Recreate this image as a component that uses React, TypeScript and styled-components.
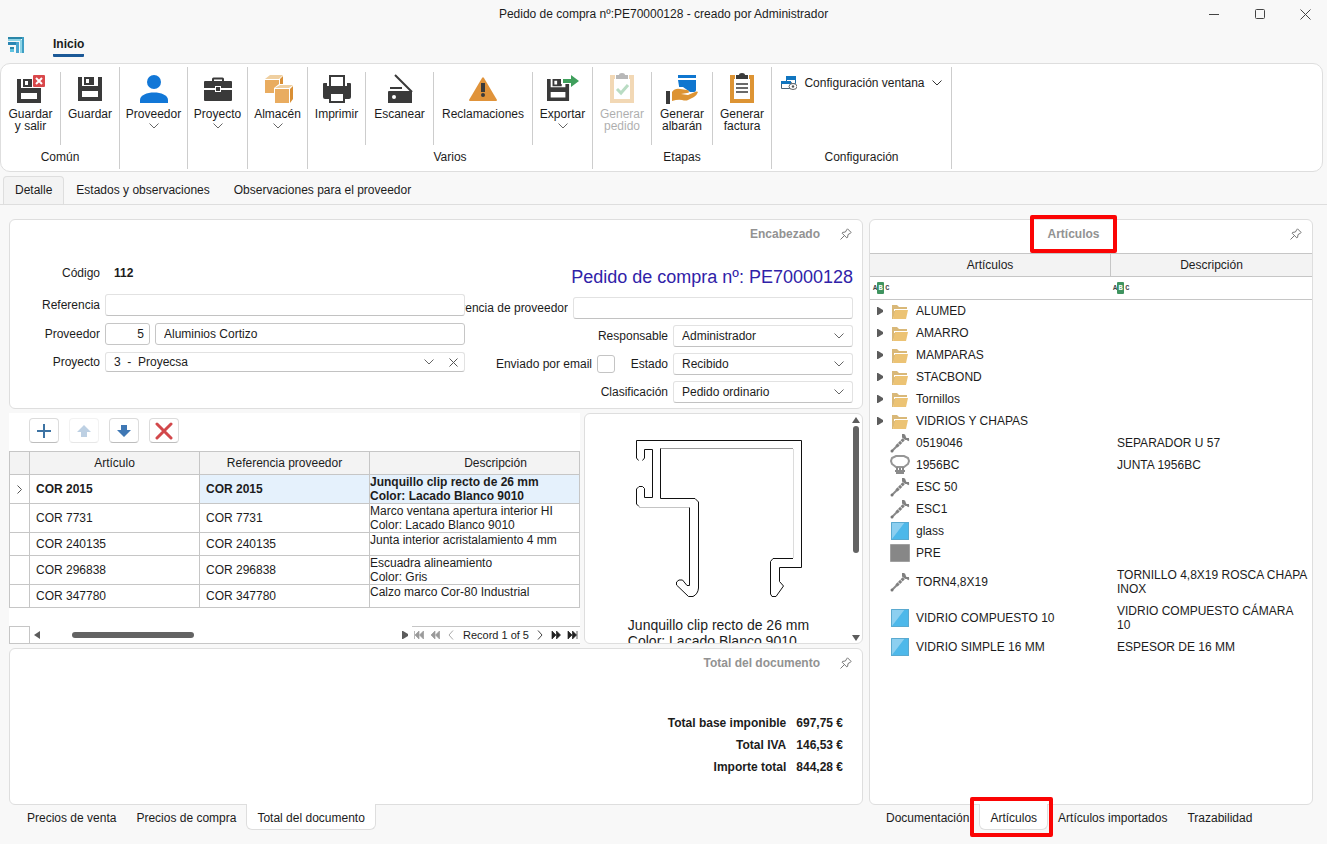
import React from 'react';
import styled, { createGlobalStyle, css } from 'styled-components';

const c = {
  page: '#f8f8f8',
  ink: '#1c1c1c',
  muted: '#929292',
  panelLine: '#dedede',
  gridLine: '#c6c6c6',
  head: '#f3f3f3',
  dark: '#3a3a3a',
  orange: '#dd9434',
  blue: '#1177d7',
  red: '#fb0404',
};

const GlobalStyle = createGlobalStyle`
  *, *::before, *::after { box-sizing: border-box; }
  body {
    margin: 0;
    background: ${c.page};
    color: ${c.ink};
    font: 12px/14px "Liberation Sans", Arial, sans-serif;
  }
  button, input, select { font: inherit; color: inherit; margin: 0; }
  svg { display: block; flex: none; }
`;

const Page = styled.div`
  display: flex;
  flex-direction: column;
  min-height: 100vh;
`;

/* ---------- window title and ribbon ---------- */

const TitleBar = styled.header`
  display: grid;
  grid-template-columns: 1fr auto 1fr;
  align-items: center;
  height: 28px;
`;

const WindowTitle = styled.h1`
  grid-column: 2;
  margin: 0;
  font-size: 12px;
  line-height: 14px;
  font-weight: 400;
`;

const WindowButtons = styled.div`
  display: flex;
  justify-content: flex-end;
`;

const PlainButton = styled.button`
  display: flex;
  align-items: center;
  justify-content: center;
  padding: 0;
  border: 0;
  background: none;
  cursor: pointer;
`;

const WindowButton = styled(PlainButton)`
  width: 46px;
  height: 26px;
  &:last-child { width: 44px; }
`;

const MenuBar = styled.nav`
  display: flex;
  align-items: flex-start;
  gap: 28px;
  height: 35px;
  padding: 9px 0 0 8px;
`;

const MenuTab = styled.a`
  padding-bottom: 3px;
  border-bottom: 3px solid #1b5997;
  border-radius: 1px;
  color: ${c.ink};
  font-weight: 700;
  text-decoration: none;
`;

const Ribbon = styled.div`
  display: flex;
  height: 109px;
  margin-right: 4px;
  padding: 3px 0 2px;
  background: #fff;
  border: 1px solid ${c.panelLine};
  border-radius: 10px;
`;

const RibbonGroup = styled.section`
  display: flex;
  flex-direction: column;
  border-right: 1px solid #cdcdcd;
`;

const RibbonItems = styled.div`
  display: flex;
  flex: 1;
`;

const RibbonLabel = styled.div`
  height: 19px;
  text-align: center;
`;

const RibbonButton = styled.button<{ $w: number }>`
  display: flex;
  flex-direction: column;
  align-items: center;
  width: ${(p) => p.$w}px;
  margin: 5px 0;
  padding: 0;
  border: 0;
  background: none;
  line-height: 12px;
  white-space: pre-line;
  cursor: pointer;
  & + & { border-left: 1px solid #cdcdcd; }
  &:disabled { color: ${c.ink}; }
  &:disabled > * { opacity: 0.36; }
  > span { margin: 4px 0 3px; }
`;

const WideButton = styled(PlainButton)`
  align-items: center;
  align-self: flex-start;
  gap: 7px;
  width: 179px;
  height: 32px;
`;

const ViewTabs = styled.nav`
  display: flex;
  align-items: flex-end;
  height: 33px;
  padding-left: 3px;
  border-bottom: 1px solid ${c.panelLine};
`;

const ViewTab = styled.a<{ $active?: boolean }>`
  height: 28px;
  padding: 7px 12px 0;
  color: ${c.ink};
  text-decoration: none;
  ${(p) =>
    p.$active &&
    css`
      padding: 6px 11px 0;
      background: ${c.head};
      border: 1px solid ${c.panelLine};
      border-bottom: 0;
      border-radius: 4px 4px 0 0;
    `}
`;

/* ---------- workspace ---------- */

const Workspace = styled.main`
  display: grid;
  grid-template-columns: minmax(0, 854fr) minmax(0, 444fr);
  gap: 6px;
  flex: 1;
  padding: 14px 14px 14px 9px;
`;

const Column = styled.div`
  display: flex;
  flex-direction: column;
  min-width: 0;
`;

const Panel = styled.section<{ $grow?: boolean }>`
  display: flex;
  flex-direction: column;
  flex: ${(p) => (p.$grow ? '1' : 'none')};
  background: #fff;
  border: 1px solid ${c.panelLine};
  border-radius: 6px;
`;

const Caption = styled.div<{ $center?: boolean }>`
  display: flex;
  align-items: center;
  height: ${(p) => (p.$center ? '33px' : '28px')};
  padding-bottom: ${(p) => (p.$center ? '5px' : '0')};
  color: ${c.muted};
  font-weight: 700;
`;

const CaptionText = styled.h2<{ $center?: boolean }>`
  flex: 1;
  margin: 0;
  padding-right: ${(p) => (p.$center ? '2px' : '9px')};
  font-size: 12px;
  line-height: 14px;
  text-align: ${(p) => (p.$center ? 'center' : 'right')};
`;

const PinButton = styled(PlainButton)`
  width: 33px;
  height: 28px;
`;

const Marked = styled.span`
  position: relative;
  display: inline-block;
`;

const Highlight = styled.span<{ $inset: string }>`
  position: absolute;
  z-index: 2;
  inset: ${(p) => p.$inset};
  border: 4px solid ${c.red};
  border-radius: 2px;
  pointer-events: none;
`;

/* ---------- order form ---------- */

const Form = styled.form`
  display: grid;
  grid-template-columns: minmax(0, 455fr) minmax(0, 388fr);
  padding: 0 9px 5px 0;
`;

const FormColumn = styled.div<{ $gap: number }>`
  display: flex;
  flex-direction: column;
  gap: ${(p) => p.$gap}px;
`;

const FormRow = styled.div`
  display: flex;
  align-items: center;
  gap: 5px;
`;

const Label = styled.label<{ $w?: number }>`
  display: flex;
  justify-content: flex-end;
  flex: ${(p) => (p.$w ? 'none' : '1')};
  width: ${(p) => (p.$w ? p.$w + 'px' : 'auto')};
  min-width: 0;
  overflow: hidden;
  white-space: nowrap;
`;

const CodeRow = styled(FormRow)`
  height: 39px;
  padding-top: 10px;
`;

const Code = styled.output`
  padding-left: 9px;
  font-weight: 700;
`;

const OrderTitle = styled.div`
  padding: 16px 0 1px;
  color: #3022a8;
  font-size: 18px;
  line-height: 26px;
  text-align: right;
`;

const field = css`
  height: 22px;
  background: #fff;
  border: 1px solid #e2e2e2;
  border-bottom-color: #c2c2c2;
  border-radius: 3px;
`;

const TextField = styled.input<{ $w?: number; $strong?: boolean; $right?: boolean }>`
  ${field}
  flex: ${(p) => (p.$w ? 'none' : '1')};
  width: ${(p) => (p.$w ? p.$w + 'px' : 'auto')};
  min-width: 0;
  padding: 0 ${(p) => (p.$right ? 5 : 8)}px 0 8px;
  border-color: ${(p) => (p.$strong ? '#c6c6c6' : '')};
  text-align: ${(p) => (p.$right ? 'right' : 'left')};
`;

const ComboFrame = styled.div<{ $w?: number; $low?: boolean }>`
  ${field}
  height: ${(p) => (p.$low ? 20 : 22)}px;
  display: grid;
  grid-template-columns: 1fr 26px auto;
  align-items: center;
  flex: ${(p) => (p.$w ? 'none' : '1')};
  width: ${(p) => (p.$w ? p.$w + 'px' : 'auto')};
  > svg {
    grid-area: 1 / 2;
    justify-self: center;
    pointer-events: none;
  }
`;

const Select = styled.select`
  grid-area: 1 / 1 / 2 / 3;
  height: 100%;
  padding: 0 26px 0 8px;
  border: 0;
  background: none;
  appearance: none;
`;

const ClearButton = styled(PlainButton)`
  grid-column: 3;
  width: 22px;
  height: 18px;
`;

const Check = styled.input`
  && { margin-right: 10px; }
  appearance: none;
  width: 18px;
  height: 18px;
  background: #fff;
  border: 1px solid #c4c4c4;
  border-radius: 3px;
`;

/* ---------- order lines ---------- */

const LinesArea = styled.div`
  display: grid;
  grid-template-columns: minmax(0, 571fr) minmax(0, 279fr);
  gap: 4px;
  height: 231px;
  margin: 4px 0;
`;

const LinesPanel = styled.section`
  display: flex;
  flex-direction: column;
  background: #fff;
  border-bottom: 1px solid ${c.gridLine};
`;

const Toolbar = styled.div`
  display: flex;
  gap: 10px;
  height: 38px;
  padding: 5px 0 0 20px;
`;

const ToolButton = styled(PlainButton)`
  width: 30px;
  height: 25px;
  background: #fff;
  border: 1px solid #dcdcdc;
  border-bottom-color: #bdbdbd;
  border-radius: 4px;
  &:disabled { opacity: 0.36; }
`;

const LinesTable = styled.table`
  width: 100%;
  table-layout: fixed;
  border-collapse: separate;
  border-spacing: 0;
  border-left: 1px solid ${c.gridLine};
  th {
    height: 24px;
    padding: 0;
    background: ${c.head};
    border: solid ${c.gridLine};
    border-width: 1px 1px 1px 0;
    font-weight: 400;
  }
  th:last-child { padding-left: 42px; }
  td {
    height: 23px;
    padding: 0 6px;
    border: solid ${c.gridLine};
    border-width: 0 1px 1px 0;
    white-space: nowrap;
  }
`;

const LineRow = styled.tr<{ $tall: boolean; $current: boolean }>`
  font-weight: ${(p) => (p.$current ? 700 : 400)};
  td { height: ${(p) => (p.$tall ? 29 : 23)}px; }
  td:nth-child(n + 3) { background: ${(p) => (p.$current ? '#e5f1fc' : 'none')}; }
  td:last-child {
    padding: 0;
    vertical-align: top;
    white-space: pre-line;
  }
`;

const LinesFooter = styled.div`
  display: flex;
  align-items: stretch;
  height: 17px;
  margin-top: auto;
`;

const FooterCorner = styled.div`
  width: 21px;
  border: solid ${c.gridLine};
  border-width: 1px 1px 0;
`;

const ScrollTrack = styled.div`
  display: flex;
  flex: 1;
  align-items: center;
  padding: 0 4px;
`;

const ScrollThumb = styled.div`
  width: 122px;
  height: 6px;
  margin: 0 auto 0 32px;
  border-radius: 3px;
  background: #636363;
`;

const Navigator = styled.div`
  display: flex;
  align-items: center;
  border-top: 1px solid ${c.gridLine};
  font-size: 11px;
  > span { padding: 0 3px; }
`;

const NavButton = styled(PlainButton)`
  width: 16px;
  height: 16px;
  &:disabled { opacity: 0.45; }
`;

const Preview = styled.section`
  display: flex;
  background: #fff;
  border: 1px solid ${c.panelLine};
  border-radius: 6px;
  overflow: hidden;
`;

const PreviewBody = styled.figure`
  display: flex;
  flex: 1;
  flex-direction: column;
  align-items: center;
  gap: 17px;
  margin: 0;
  padding: 22px 0 0 2px;
`;

const PreviewCaption = styled.figcaption`
  font-size: 14px;
  line-height: 16px;
  white-space: pre-line;
`;

const PreviewScroll = styled.div`
  display: flex;
  flex-direction: column;
  align-items: center;
  justify-content: space-between;
  width: 12px;
  padding: 3px 0 2px;
`;

const PreviewThumb = styled.div`
  width: 6px;
  height: 127px;
  margin: 3px 0 auto;
  border-radius: 3px;
  background: #636363;
`;

/* ---------- totals ---------- */

const Totals = styled.dl`
  display: grid;
  grid-template-columns: 1fr auto;
  gap: 8px 10px;
  margin: 0;
  padding: 39px 19px 29px 0;
  font-weight: 700;
  text-align: right;
  dt, dd { margin: 0; }
`;

const BottomTabs = styled.nav<{ $indent: number }>`
  display: flex;
  height: 26px;
  margin-top: -1px;
  padding-left: ${(p) => p.$indent}px;
`;

const BottomTab = styled.a<{ $active?: boolean }>`
  position: relative;
  padding: 7px 10px 0;
  color: ${c.ink};
  text-decoration: none;
  white-space: nowrap;
  ${(p) =>
    p.$active &&
    css`
      background: #fff;
      border: 1px solid ${c.panelLine};
      border-top: 0;
      border-radius: 0 0 6px 6px;
    `}
`;

/* ---------- articles ---------- */

const ArticlesTable = styled.table`
  width: 100%;
  table-layout: fixed;
  border-collapse: separate;
  border-spacing: 0;
  th {
    height: 24px;
    padding: 0;
    background: ${c.head};
    border: solid ${c.gridLine};
    border-width: 1px 0;
    font-weight: 400;
  }
  th + th { border-left-width: 1px; }
  td { padding: 0; }
`;

const FilterCell = styled.td`
  height: 23px;
  border-bottom: 1px solid ${c.gridLine};
`;

const FilterBox = styled.label`
  display: flex;
  align-items: center;
  padding-left: 3px;
`;

const FilterInput = styled.input`
  flex: 1;
  min-width: 0;
  height: 18px;
  border: 0;
  background: none;
`;

const AbcMark = styled.span`
  display: flex;
  align-items: center;
  color: #444;
  font: 700 7px/12px "Liberation Mono", monospace;
  b {
    width: 7px;
    margin: 0 1px 0 0;
    border-radius: 1px;
    background: #3f9460;
    color: #fff;
    text-align: center;
  }
`;

const ArticleRow = styled.tr<{ $tall: boolean }>`
  height: ${(p) => (p.$tall ? 36 : 22)}px;
  td:last-child {
    padding-left: 7px;
    white-space: pre-line;
  }
`;

const ArticleName = styled.div`
  display: flex;
  align-items: center;
  padding-left: 2px;
  > svg { margin-right: 6px; }
`;

const Expander = styled(PlainButton)`
  width: 18px;
  height: 20px;
  padding-right: 2px;
`;

/* ---------- icons ---------- */

const Ico = ({ children }: { children: React.ReactNode }) => (
  <svg width="32" height="32" viewBox="0 0 32 32" aria-hidden="true">{children}</svg>
);

const floppy = 'M0 0h4v9h16V0h4v24H0zM4 14v6h16v-6zM6 0h10v8H6zM8 2v4h3V2z';

const SaveExitIcon = () => (
  <Ico>
    <path transform="translate(2 7)" fill={c.dark} fillRule="evenodd" d={floppy} />
    <path fill="#fff" d="M17 2h14v14H17z" />
    <rect x="18" y="3" width="12" height="12" rx="1" fill="#d9484b" />
    <path d="M21 6l6 6M27 6l-6 6" stroke="#fff" strokeWidth="2" />
  </Ico>
);
const SaveIcon = () => (
  <Ico><path transform="translate(4 5)" fill={c.dark} fillRule="evenodd" d={floppy} /></Ico>
);
const ExportIcon = () => (
  <Ico>
    <path transform="translate(0 7) scale(.92)" fill={c.dark} fillRule="evenodd" d={floppy} />
    <path fill="#fff" d="M14 2h18v10H14z" />
    <path fill="#3f9f5c" d="M16 7h8V3l8 6-8 6v-4h-8z" />
  </Ico>
);
const UserIcon = () => (
  <Ico>
    <circle cx="16" cy="10" r="7" fill={c.blue} />
    <path fill={c.blue} d="M2 31v-3c0-5 7-7.500 14-7.500s14 2.500 14 7.500v3z" />
  </Ico>
);
const CaseIcon = () => (
  <Ico>
    <path fill="none" stroke={c.dark} strokeWidth="2" d="M11 10V7q0-.5.5-.5h9q.5 0 .5.5v3" />
    <path fill={c.dark} d="M3 9h26q1 0 1 1v6H19v-2h-6v2H2v-6q0-1 1-1zM2 18h11v2h6v-2h11v10q0 1-1 1H3q-1 0-1-1z" />
    <path fill="#fff" d="M13 14h6v6h-6z" />
    <path fill={c.dark} d="M14 15h4v4h-4z" />
  </Ico>
);
const BoxesIcon = () => (
  <Ico>
    <path fill="#e9ac60" d="M3 8h14v13H3z" />
    <path fill="#efcfa0" d="M3 7l5-4h13l-4 4z" />
    <path fill="#d98f35" d="M18 7l3-3v8l-3 1z" />
    <path fill="#fff" d="M12 22v-6l5-4h15v20H12z" />
    <path fill="#e9ac60" d="M13 17h14v14H13z" />
    <path fill="#efcfa0" d="M13 16l5-3h13l-4 3z" />
    <path fill="#d98f35" d="M28 17l3-3v13l-3 4z" />
  </Ico>
);
const PrinterIcon = () => (
  <Ico>
    <path fill={c.dark} d="M3 11h3v3h20v-3h3q1 0 1 1v13q0 2-2 2H4q-2 0-2-2V12q0-1 1-1z" />
    <path fill="#fff" stroke={c.dark} strokeWidth="2" d="M9 15V4h14v11" />
    <path fill={c.dark} d="M6 14h20v4H6z" />
    <path fill="#fff" stroke={c.dark} strokeWidth="2" d="M9 21h14v9H9z" />
  </Ico>
);
const ScannerIcon = () => (
  <Ico>
    <path stroke={c.dark} strokeWidth="2" d="M11 3l17 17M6 16h12" />
    <path fill={c.dark} d="M5 19h22q1 0 1 1v11H4V20q0-1 1-1z" />
    <circle cx="10" cy="25" r="2" fill="#fff" />
  </Ico>
);
const WarnIcon = () => (
  <Ico>
    <path fill="#e0933a" d="M15 6q1-1.500 2 0l13 22q0 1-1 1H3q-1 0-1-1z" />
    <path fill={c.dark} d="M14 11h4v9h-4z" />
    <circle cx="16" cy="23" r="2" fill={c.dark} />
  </Ico>
);
const Board = ({ children }: { children: React.ReactNode }) => (
  <Ico>
    <path fill="#fff" stroke={c.orange} strokeWidth="4" d="M6 5h20v24H6z" />
    <path fill="#fff" d="M9 2h14v7H9z" />
    <path fill={c.dark} d="M10 3h3q0-2 3-2t3 2h3v4H10z" />
    {children}
  </Ico>
);
const OrderIcon = () => (
  <Board><path fill="none" stroke="#3f9f5c" strokeWidth="3" d="M11 17l4 4 7-8" /></Board>
);
const InvoiceIcon = () => (
  <Board><path stroke="#6a6a6a" strokeWidth="2" d="M10 12h12M10 16h12M10 20h12" /></Board>
);
const DeliveryIcon = () => (
  <Ico>
    <path fill="#0f76cf" d="M12 3h18v3H12zM12 8h18v10q0 2-2 2H14z" />
    <path fill="#fff" d="M5 20l7-5h5l7 5v3H5z" />
    <path fill={c.orange} d="M6 29V20q3-4 8-3l7 1q2 0 2 2 0 1-2 1l-6 1 7 1 7-3q2-1 3 0-1 3-4 5l-6 3q-2 1-6 0-4-1-10 1z" />
    <path fill={c.dark} d="M0 19h4v13H0z" />
  </Ico>
);
const WindowsIcon = () => (
  <svg width="16" height="14" viewBox="0 0 16 14" aria-hidden="true">
    <path fill="#fff" stroke="#1e6ca8" d="M5.500 1.500h9v6h-9z" />
    <path fill="#1175bf" d="M5 0h10v4H5z" />
    <path fill="#fff" stroke="#4a6275" d="M.5 6.500h10v6H.5z" />
    <path fill="#1175bf" d="M0 5h10v3H0z" />
    <ellipse cx="12" cy="10.500" rx="4" ry="3" fill="#fff" stroke="#666" />
    <circle cx="12" cy="10.500" r="1.200" fill="#555" />
  </svg>
);
const Chevron = ({ color = '#666' }: { color?: string }) => (
  <svg width="10" height="6" viewBox="0 0 10 6" aria-hidden="true">
    <path fill="none" stroke={color} d="M.5.5L5 5 9.500.5" />
  </svg>
);
const CrossIcon = () => (
  <svg width="9" height="9" viewBox="0 0 9 9" aria-hidden="true">
    <path stroke="#555" d="M.5.5l8 8M8.500.5l-8 8" />
  </svg>
);
const PinIcon = () => (
  <svg width="12" height="12" viewBox="0 0 12 12" aria-hidden="true">
    <path fill="none" stroke="#777" d="M7.500.8l3.700 3.700-1 .8-2.200 1.300-.4 2.800-.8.5-4.700-4.700.5-.8 2.800-.4L6.700 1.800zM4.300 7.700L.5 11.500" />
  </svg>
);
const LogoIcon = () => (
  <svg width="17" height="17" viewBox="0 0 17 17" aria-hidden="true">
    <path fill="#8fd4e6" d="M0 2h13v2H0zM12 3h2v13h-2z" />
    <path fill="#2a86a8" d="M0 0h16v2H0z" />
    <path fill="#3f9fc4" d="M14 0h2v16h-2z" />
    <path fill="#2a86b4" d="M0 5h10v3H0z" />
    <path fill="#4aa5cf" d="M8 5h3v11H8z" />
    <path fill="#5fc3e0" d="M2 10h4v5H2z" />
    <path fill="#2a86a8" d="M2 10h4v2H2z" />
  </svg>
);
const Triangle = ({ dir }: { dir: 'left' | 'right' | 'up' | 'down' }) => {
  const wide = dir === 'up' || dir === 'down';
  const d = {
    left: 'M6 0v8L0 4z',
    right: 'M0 0h1l5 3v2L1 8H0z',
    up: 'M0 6L4 0l4 6z',
    down: 'M0 0h8L4 6z',
  }[dir];
  return (
    <svg width={wide ? 8 : 6} height={wide ? 6 : 8} aria-hidden="true">
      <path fill="#5c5c5c" d={d} />
    </svg>
  );
};
const navPaths = {
  first: 'M.5 1v8M5 1v8L1 5zM9.500 1v8l-4-4z',
  prevPage: 'M5 1v8L1 5zM9.500 1v8l-4-4z',
  nextPage: 'M1 1v8l4-4zM5.500 1v8l4-4z',
  last: 'M1 1v8l4-4zM5.500 1v8l4-4zM10 1v8',
  prev: 'M7 .5L3 5l4 4.500',
  next: 'M3 .5L7 5 3 9.500',
};
const NavIcon = ({ kind }: { kind: keyof typeof navPaths }) => {
  const single = kind === 'prev' || kind === 'next';
  return (
    <svg width="11" height="10" viewBox="0 0 11 10" aria-hidden="true">
      {single ? (
        <path d={navPaths[kind]} fill="none" stroke="#444" />
      ) : (
        <path d={navPaths[kind]} fill="#222" stroke="#222" strokeWidth=".7" />
      )}
    </svg>
  );
};
const ToolIcon = ({ kind }: { kind: 'add' | 'up' | 'down' | 'remove' }) => (
  <svg width="18" height="18" viewBox="0 0 18 18" aria-hidden="true">
    {kind === 'add' && <path stroke="#3d73a3" strokeWidth="2" d="M9 2v14M2 9h14" />}
    {kind === 'up' && <path fill="#4a7fb2" d="M9 3l7 7h-4v5H6v-5H2z" />}
    {kind === 'down' && <path fill="#3f78b5" d="M9 15L2 8h4V3h6v5h4z" />}
    {kind === 'remove' && (
      <path stroke="#d2484b" strokeWidth="3" strokeLinecap="round" d="M2 2l14 14M16 2L2 16" />
    )}
  </svg>
);

type Kind = 'folder' | 'screw' | 'seal' | 'glass' | 'solid';
const KindIcon = ({ kind }: { kind: Kind }) => (
  <svg width="20" height="20" viewBox="0 0 20 20" aria-hidden="true">
    {kind === 'folder' && (
      <>
        <path fill="#d9b878" d="M2 4h5l2 2h8v4H6l-3 8H2z" />
        <path fill="#fff" d="M4 8h14v2H4z" />
        <path fill="#ecc374" d="M5 9h13l-2 9H3z" />
      </>
    )}
    {kind === 'screw' && (
      <>
        <path stroke="#8a8a8a" strokeWidth="2" d="M2 18L8 12" />
        <path stroke="#808080" strokeWidth="3" d="M6.500 13.500L15 5" strokeDasharray="3 .6" />
        <path fill="none" stroke="#808080" strokeWidth="2" d="M13 1v3l3 2h3M14 1.500l1.500 4M16 5.500l3 2" />
        <circle cx="2" cy="18" r="1.500" fill="#777" />
      </>
    )}
    {kind === 'seal' && (
      <>
        <path fill="none" stroke="#969696" strokeWidth="2" d="M6 1h8l4 2 1 3-1 3-4 3H6L2 9 1 6l1-3z" />
        <path fill="none" stroke="#8a8a8a" strokeWidth="2" d="M7 12v6h6v-6M5 16h10M10 13v5" />
      </>
    )}
    {kind === 'glass' && (
      <>
        <path fill="#4db8ea" d="M1 1h18v18H1z" />
        <path fill="#8ccff0" d="M1 1h14L2 18H1z" />
        <path fill="none" stroke="#5aa9cf" d="M1.500 1.500h17v17h-17z" />
      </>
    )}
    {kind === 'solid' && <path fill="#878787" stroke="#a0a0a0" d="M.5 1.500h19v17H.5z" />}
  </svg>
);

const ProfileDrawing = () => (
  <svg width="176" height="164" viewBox="630 436 176 164" fill="none" stroke="#111" role="img" aria-label="Perfil">
    <path d="M637.500 460.500L635.500 458V440.500H800.500V567.500H778.500V581.500L782.500 586 775 596.500H771L769.500 594V561.500L772 558.500H792" />
    <path stroke="#dcdcdc" d="M792.500 558V449" />
    <path stroke="#999" d="M792 448.500H659.500" />
    <path d="M659.500 448.500V498.500H694L697.500 502V588Q697 594 692 596.500H687.500L675.500 585V582L678 580H681.500L686 585.500H688.500V507.500" />
    <path stroke="#c4c4c4" d="M688 507.500H638" />
    <path d="M638 506.500L635.500 504V489L638 486.500H641.500L643.500 488.500V497.500H651.500V449.500H643.500V458L641.500 460.500" />
  </svg>
);

/* ---------- data ---------- */

type Action = { text: string; icon: React.ReactNode; w: number; more?: boolean; disabled?: boolean };

const groups: { label: string; actions: Action[] }[] = [
  {
    label: 'Común',
    actions: [
      { text: 'Guardar\ny salir', icon: <SaveExitIcon />, w: 59 },
      { text: 'Guardar', icon: <SaveIcon />, w: 59 },
    ],
  },
  { label: '', actions: [{ text: 'Proveedor', icon: <UserIcon />, w: 67, more: true }] },
  { label: '', actions: [{ text: 'Proyecto', icon: <CaseIcon />, w: 59, more: true }] },
  { label: '', actions: [{ text: 'Almacén', icon: <BoxesIcon />, w: 59, more: true }] },
  {
    label: 'Varios',
    actions: [
      { text: 'Imprimir', icon: <PrinterIcon />, w: 57 },
      { text: 'Escanear', icon: <ScannerIcon />, w: 68 },
      { text: 'Reclamaciones', icon: <WarnIcon />, w: 99 },
      { text: 'Exportar', icon: <ExportIcon />, w: 60, more: true },
    ],
  },
  {
    label: 'Etapas',
    actions: [
      { text: 'Generar\npedido', icon: <OrderIcon />, w: 58, disabled: true },
      { text: 'Generar\nalbarán', icon: <DeliveryIcon />, w: 61 },
      { text: 'Generar\nfactura', icon: <InvoiceIcon />, w: 59 },
    ],
  },
];

const lines = [
  { code: 'COR 2015', text: 'Junquillo clip recto de 26 mm\nColor: Lacado Blanco 9010' },
  { code: 'COR 7731', text: 'Marco ventana apertura interior HI\nColor: Lacado Blanco 9010' },
  { code: 'COR 240135', text: 'Junta interior acristalamiento 4 mm' },
  { code: 'COR 296838', text: 'Escuadra alineamiento\nColor: Gris' },
  { code: 'COR 347780', text: 'Calzo marco Cor-80 Industrial' },
];

const articles: { name: string; kind: Kind; text?: string }[] = [
  { name: 'ALUMED', kind: 'folder' },
  { name: 'AMARRO', kind: 'folder' },
  { name: 'MAMPARAS', kind: 'folder' },
  { name: 'STACBOND', kind: 'folder' },
  { name: 'Tornillos', kind: 'folder' },
  { name: 'VIDRIOS Y CHAPAS', kind: 'folder' },
  { name: '0519046', kind: 'screw', text: 'SEPARADOR U 57' },
  { name: '1956BC', kind: 'seal', text: 'JUNTA 1956BC' },
  { name: 'ESC 50', kind: 'screw' },
  { name: 'ESC1', kind: 'screw' },
  { name: 'glass', kind: 'glass' },
  { name: 'PRE', kind: 'solid' },
  { name: 'TORN4,8X19', kind: 'screw', text: 'TORNILLO 4,8X19 ROSCA CHAPA\nINOX' },
  { name: 'VIDRIO COMPUESTO 10', kind: 'glass', text: 'VIDRIO COMPUESTO CÁMARA\n10' },
  { name: 'VIDRIO SIMPLE 16 MM', kind: 'glass', text: 'ESPESOR DE 16 MM' },
];

const Combo = ({ id, value }: { id: string; value: string }) => (
  <ComboFrame $w={180}>
    <Select id={id} defaultValue={value}>
      <option>{value}</option>
    </Select>
    <Chevron />
  </ComboFrame>
);

const Filter = ({ label }: { label: string }) => (
  <FilterBox>
    <AbcMark aria-hidden="true">A<b>B</b>C</AbcMark>
    <FilterInput aria-label={label} />
  </FilterBox>
);

const isTall = (text?: string) => !!text && text.includes('\n');

export default function App() {
  return (
    <Page>
      <GlobalStyle />
      <TitleBar>
        <WindowTitle>Pedido de compra nº:PE70000128 - creado por Administrador</WindowTitle>
        <WindowButtons>
          <WindowButton aria-label="Minimizar">
            <svg width="10" height="10"><path stroke="#444" d="M0 5.500h10" /></svg>
          </WindowButton>
          <WindowButton aria-label="Maximizar">
            <svg width="10" height="10"><rect x=".5" y=".5" width="9" height="9" rx="1" fill="none" stroke="#444" /></svg>
          </WindowButton>
          <WindowButton aria-label="Cerrar">
            <svg width="11" height="11"><path stroke="#444" d="M.5.5l10 10M10.500.5l-10 10" /></svg>
          </WindowButton>
        </WindowButtons>
      </TitleBar>
      <MenuBar>
        <LogoIcon />
        <MenuTab href="#inicio">Inicio</MenuTab>
      </MenuBar>

      <Ribbon>
        {groups.map((g, i) => (
          <RibbonGroup key={i}>
            <RibbonItems>
              {g.actions.map((a) => (
                <RibbonButton key={a.text} type="button" $w={a.w} disabled={a.disabled}>
                  {a.icon}
                  <span>{a.text}</span>
                  {a.more && <Chevron />}
                </RibbonButton>
              ))}
            </RibbonItems>
            <RibbonLabel>{g.label}</RibbonLabel>
          </RibbonGroup>
        ))}
        <RibbonGroup>
          <RibbonItems>
            <WideButton type="button">
              <WindowsIcon />
              Configuración ventana
              <Chevron color="#333" />
            </WideButton>
          </RibbonItems>
          <RibbonLabel>Configuración</RibbonLabel>
        </RibbonGroup>
      </Ribbon>

      <ViewTabs>
        <ViewTab href="#detalle" $active>Detalle</ViewTab>
        <ViewTab href="#estados">Estados y observaciones</ViewTab>
        <ViewTab href="#observaciones">Observaciones para el proveedor</ViewTab>
      </ViewTabs>

      <Workspace>
        <Column>
          <Panel>
            <Caption>
              <CaptionText>Encabezado</CaptionText>
              <PinButton aria-label="Fijar encabezado"><PinIcon /></PinButton>
            </Caption>
            <Form>
              <FormColumn $gap={7}>
                <CodeRow>
                  <Label $w={90} htmlFor="codigo">Código</Label>
                  <Code id="codigo">112</Code>
                </CodeRow>
                <FormRow>
                  <Label $w={90} htmlFor="referencia">Referencia</Label>
                  <TextField id="referencia" />
                </FormRow>
                <FormRow>
                  <Label $w={90} htmlFor="proveedor">Proveedor</Label>
                  <TextField id="proveedor" $w={45} $strong $right defaultValue="5" />
                  <TextField aria-label="Nombre del proveedor" $strong defaultValue="Aluminios Cortizo" />
                </FormRow>
                <FormRow>
                  <Label $w={90} htmlFor="proyecto">Proyecto</Label>
                  <ComboFrame $low>
                    <Select id="proyecto">
                      <option>{'3\u00a0 -\u00a0 Proyecsa'}</option>
                    </Select>
                    <Chevron />
                    <ClearButton type="button" aria-label="Quitar proyecto"><CrossIcon /></ClearButton>
                  </ComboFrame>
                </FormRow>
              </FormColumn>
              <FormColumn $gap={6}>
                <OrderTitle>Pedido de compra nº: PE70000128</OrderTitle>
                <FormRow>
                  <Label htmlFor="refprov">Referencia de proveedor</Label>
                  <TextField id="refprov" $w={280} />
                </FormRow>
                <FormRow>
                  <Label htmlFor="responsable">Responsable</Label>
                  <Combo id="responsable" value="Administrador" />
                </FormRow>
                <FormRow>
                  <Label htmlFor="email">Enviado por email</Label>
                  <Check id="email" type="checkbox" />
                  <Label $w={38} htmlFor="estado">Estado</Label>
                  <Combo id="estado" value="Recibido" />
                </FormRow>
                <FormRow>
                  <Label htmlFor="clasificacion">Clasificación</Label>
                  <Combo id="clasificacion" value="Pedido ordinario" />
                </FormRow>
              </FormColumn>
            </Form>
          </Panel>

          <LinesArea>
            <LinesPanel>
              <Toolbar>
                <ToolButton aria-label="Añadir línea"><ToolIcon kind="add" /></ToolButton>
                <ToolButton aria-label="Subir línea" disabled><ToolIcon kind="up" /></ToolButton>
                <ToolButton aria-label="Bajar línea"><ToolIcon kind="down" /></ToolButton>
                <ToolButton aria-label="Eliminar línea"><ToolIcon kind="remove" /></ToolButton>
              </Toolbar>
              <LinesTable>
                <colgroup>
                  <col width="20" />
                  <col width="170" />
                  <col width="170" />
                  <col />
                </colgroup>
                <thead>
                  <tr>
                    <th aria-label="Fila actual" />
                    <th>Artículo</th>
                    <th>Referencia proveedor</th>
                    <th>Descripción</th>
                  </tr>
                </thead>
                <tbody>
                  {lines.map((l, i) => (
                    <LineRow key={l.code} $tall={isTall(l.text)} $current={i === 0}>
                      <td>
                        {i === 0 && (
                          <svg width="7" height="9" aria-hidden="true">
                            <path fill="none" stroke="#555" d="M1.500.5l4 4-4 4" />
                          </svg>
                        )}
                      </td>
                      <td>{l.code}</td>
                      <td>{l.code}</td>
                      <td>{l.text}</td>
                    </LineRow>
                  ))}
                </tbody>
              </LinesTable>
              <LinesFooter>
                <FooterCorner />
                <ScrollTrack>
                  <Triangle dir="left" />
                  <ScrollThumb />
                  <Triangle dir="right" />
                </ScrollTrack>
                <Navigator>
                  <NavButton aria-label="Primero" disabled><NavIcon kind="first" /></NavButton>
                  <NavButton aria-label="Página anterior" disabled><NavIcon kind="prevPage" /></NavButton>
                  <NavButton aria-label="Anterior" disabled><NavIcon kind="prev" /></NavButton>
                  <span>Record 1 of 5</span>
                  <NavButton aria-label="Siguiente"><NavIcon kind="next" /></NavButton>
                  <NavButton aria-label="Página siguiente"><NavIcon kind="nextPage" /></NavButton>
                  <NavButton aria-label="Último"><NavIcon kind="last" /></NavButton>
                </Navigator>
              </LinesFooter>
            </LinesPanel>
            <Preview>
              <PreviewBody>
                <ProfileDrawing />
                <PreviewCaption>{lines[0].text}</PreviewCaption>
              </PreviewBody>
              <PreviewScroll>
                <Triangle dir="up" />
                <PreviewThumb />
                <Triangle dir="down" />
              </PreviewScroll>
            </Preview>
          </LinesArea>

          <Panel $grow>
            <Caption>
              <CaptionText>Total del documento</CaptionText>
              <PinButton aria-label="Fijar totales"><PinIcon /></PinButton>
            </Caption>
            <Totals>
              <dt>Total base imponible</dt>
              <dd>697,75 €</dd>
              <dt>Total IVA</dt>
              <dd>146,53 €</dd>
              <dt>Importe total</dt>
              <dd>844,28 €</dd>
            </Totals>
          </Panel>
          <BottomTabs $indent={8}>
            <BottomTab href="#venta">Precios de venta</BottomTab>
            <BottomTab href="#compra">Precios de compra</BottomTab>
            <BottomTab href="#total" $active>Total del documento</BottomTab>
          </BottomTabs>
        </Column>

        <Column>
          <Panel $grow>
            <Caption $center>
              <CaptionText $center>
                <Marked>
                  Artículos
                  <Highlight $inset="-12px -17px" />
                </Marked>
              </CaptionText>
              <PinButton aria-label="Fijar artículos"><PinIcon /></PinButton>
            </Caption>
            <ArticlesTable>
              <colgroup>
                <col width="240" />
                <col />
              </colgroup>
              <thead>
                <tr>
                  <th>Artículos</th>
                  <th>Descripción</th>
                </tr>
              </thead>
              <tbody>
                <tr>
                  <FilterCell><Filter label="Filtrar artículos" /></FilterCell>
                  <FilterCell><Filter label="Filtrar descripción" /></FilterCell>
                </tr>
                {articles.map((a) => (
                  <ArticleRow key={a.name} $tall={isTall(a.text)}>
                    <td>
                      <ArticleName>
                        <Expander as={a.kind === 'folder' ? 'button' : 'span'}>
                          {a.kind === 'folder' && <Triangle dir="right" />}
                        </Expander>
                        <KindIcon kind={a.kind} />
                        {a.name}
                      </ArticleName>
                    </td>
                    <td>{a.text}</td>
                  </ArticleRow>
                ))}
              </tbody>
            </ArticlesTable>
          </Panel>
          <BottomTabs $indent={7}>
            <BottomTab href="#documentacion">Documentación</BottomTab>
            <BottomTab href="#articulos" $active>
              Artículos
              <Highlight $inset="-7px -6px -8px -10px" />
            </BottomTab>
            <BottomTab href="#importados">Artículos importados</BottomTab>
            <BottomTab href="#trazabilidad">Trazabilidad</BottomTab>
          </BottomTabs>
        </Column>
      </Workspace>
    </Page>
  );
}
